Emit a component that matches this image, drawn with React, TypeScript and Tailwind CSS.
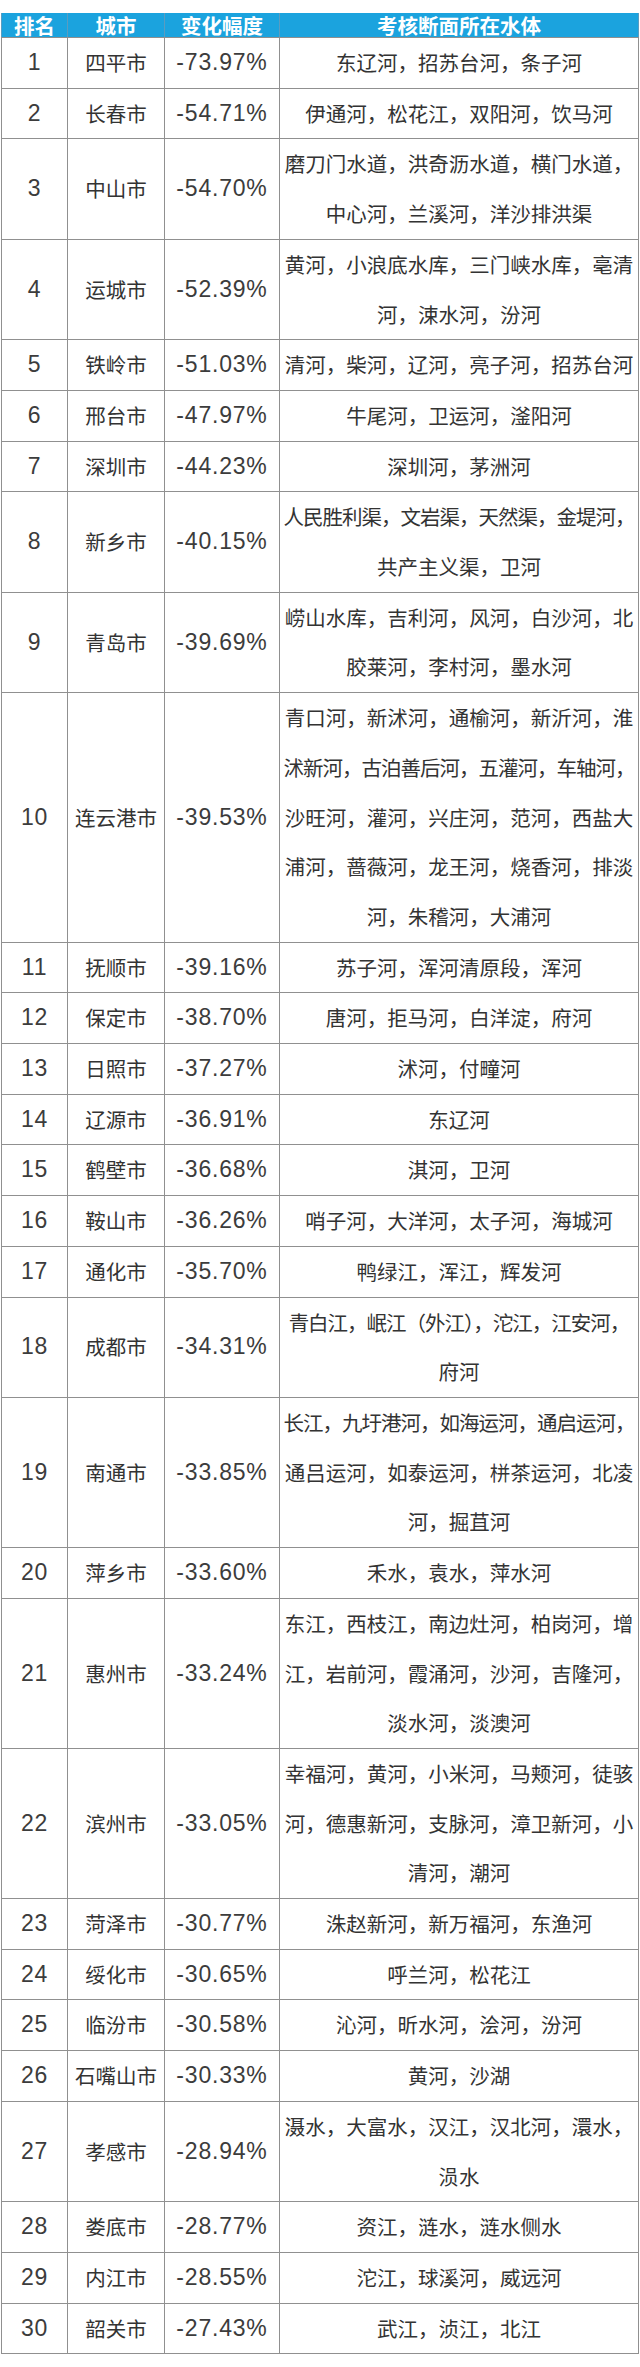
import React from 'react'

type Row = {
  rank: number
  city: string
  change: string
  waters: string[]
}

const rows: Row[] = [
  { rank: 1, city: '四平市', change: '-73.97%', waters: ['东辽河，招苏台河，条子河'] },
  { rank: 2, city: '长春市', change: '-54.71%', waters: ['伊通河，松花江，双阳河，饮马河'] },
  { rank: 3, city: '中山市', change: '-54.70%', waters: ['磨刀门水道，洪奇沥水道，横门水道，', '中心河，兰溪河，洋沙排洪渠'] },
  { rank: 4, city: '运城市', change: '-52.39%', waters: ['黄河，小浪底水库，三门峡水库，亳清', '河，涑水河，汾河'] },
  { rank: 5, city: '铁岭市', change: '-51.03%', waters: ['清河，柴河，辽河，亮子河，招苏台河'] },
  { rank: 6, city: '邢台市', change: '-47.97%', waters: ['牛尾河，卫运河，滏阳河'] },
  { rank: 7, city: '深圳市', change: '-44.23%', waters: ['深圳河，茅洲河'] },
  { rank: 8, city: '新乡市', change: '-40.15%', waters: ['人民胜利渠，文岩渠，天然渠，金堤河，', '共产主义渠，卫河'] },
  { rank: 9, city: '青岛市', change: '-39.69%', waters: ['崂山水库，吉利河，风河，白沙河，北', '胶莱河，李村河，墨水河'] },
  {
    rank: 10,
    city: '连云港市',
    change: '-39.53%',
    waters: [
      '青口河，新沭河，通榆河，新沂河，淮',
      '沭新河，古泊善后河，五灌河，车轴河，',
      '沙旺河，灌河，兴庄河，范河，西盐大',
      '浦河，蔷薇河，龙王河，烧香河，排淡',
      '河，朱稽河，大浦河',
    ],
  },
  { rank: 11, city: '抚顺市', change: '-39.16%', waters: ['苏子河，浑河清原段，浑河'] },
  { rank: 12, city: '保定市', change: '-38.70%', waters: ['唐河，拒马河，白洋淀，府河'] },
  { rank: 13, city: '日照市', change: '-37.27%', waters: ['沭河，付疃河'] },
  { rank: 14, city: '辽源市', change: '-36.91%', waters: ['东辽河'] },
  { rank: 15, city: '鹤壁市', change: '-36.68%', waters: ['淇河，卫河'] },
  { rank: 16, city: '鞍山市', change: '-36.26%', waters: ['哨子河，大洋河，太子河，海城河'] },
  { rank: 17, city: '通化市', change: '-35.70%', waters: ['鸭绿江，浑江，辉发河'] },
  { rank: 18, city: '成都市', change: '-34.31%', waters: ['青白江，岷江（外江），沱江，江安河，', '府河'] },
  { rank: 19, city: '南通市', change: '-33.85%', waters: ['长江，九圩港河，如海运河，通启运河，', '通吕运河，如泰运河，栟茶运河，北凌', '河，掘苴河'] },
  { rank: 20, city: '萍乡市', change: '-33.60%', waters: ['禾水，袁水，萍水河'] },
  { rank: 21, city: '惠州市', change: '-33.24%', waters: ['东江，西枝江，南边灶河，柏岗河，增', '江，岩前河，霞涌河，沙河，吉隆河，', '淡水河，淡澳河'] },
  { rank: 22, city: '滨州市', change: '-33.05%', waters: ['幸福河，黄河，小米河，马颊河，徒骇', '河，德惠新河，支脉河，漳卫新河，小', '清河，潮河'] },
  { rank: 23, city: '菏泽市', change: '-30.77%', waters: ['洙赵新河，新万福河，东渔河'] },
  { rank: 24, city: '绥化市', change: '-30.65%', waters: ['呼兰河，松花江'] },
  { rank: 25, city: '临汾市', change: '-30.58%', waters: ['沁河，昕水河，浍河，汾河'] },
  { rank: 26, city: '石嘴山市', change: '-30.33%', waters: ['黄河，沙湖'] },
  { rank: 27, city: '孝感市', change: '-28.94%', waters: ['滠水，大富水，汉江，汉北河，澴水，', '涢水'] },
  { rank: 28, city: '娄底市', change: '-28.77%', waters: ['资江，涟水，涟水侧水'] },
  { rank: 29, city: '内江市', change: '-28.55%', waters: ['沱江，球溪河，威远河'] },
  { rank: 30, city: '韶关市', change: '-27.43%', waters: ['武江，浈江，北江'] },
]

const headers = ['排名', '城市', '变化幅度', '考核断面所在水体']

export default function App() {
  return (
    <div className="w-[640px] min-h-[2367px] bg-white pt-[13px] font-['Noto_Sans_CJK_SC',sans-serif] text-[#333]">
      <table className="ml-[1px] w-[637px] table-fixed border-collapse">
        <colgroup>
          <col className="w-[66px]" />
          <col className="w-[97px]" />
          <col className="w-[115px]" />
          <col className="w-[359px]" />
        </colgroup>
        <thead>
          <tr className="bg-[#1ba3de]">
            {headers.map((h) => (
              <th
                key={h}
                className="h-[24px] border-x border-b border-x-[#5a9cc0] border-b-[#8f8f8f] p-0 text-center text-[20.5px] font-bold leading-[24px] text-white"
              >
                {h}
              </th>
            ))}
          </tr>
        </thead>
        <tbody>
          {rows.map((r) => (
            <tr key={r.rank}>
              <td className="border border-[#909090] p-0 text-center font-['Liberation_Sans',sans-serif] text-[23px] leading-[49.7px] tracking-[0.8px] text-[#3c3c3c]">
                {r.rank}
              </td>
              <td className="border border-[#909090] p-0 text-center text-[20.5px] leading-[49.7px] whitespace-nowrap">
                {r.city}
              </td>
              <td className="border border-[#909090] p-0 text-center font-['Liberation_Sans',sans-serif] text-[23px] leading-[49.7px] tracking-[0.8px] text-[#3c3c3c]">
                {r.change}
              </td>
              <td className="border border-[#909090] p-0 text-center text-[20.5px] leading-[49.7px]">
                {r.waters.map((line, i) => (
                  <div
                    key={i}
                    className={line.length > 17 ? 'whitespace-nowrap tracking-[-1px]' : 'whitespace-nowrap'}
                  >
                    {line}
                  </div>
                ))}
              </td>
            </tr>
          ))}
        </tbody>
      </table>
    </div>
  )
}
